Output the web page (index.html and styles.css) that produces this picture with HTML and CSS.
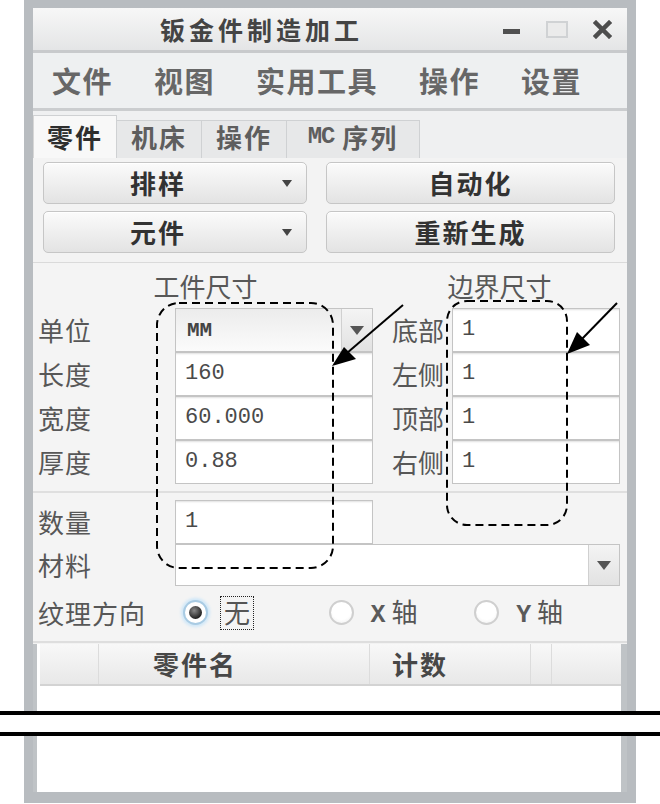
FILE: index.html
```html
<!DOCTYPE html>
<html lang="zh">
<head>
<meta charset="utf-8">
<title>钣金件制造加工</title>
<link rel="stylesheet" href="styles.css">
</head>
<body>
<div class="win">
  <div class="inner">
    <div class="titlebar">
      <span class="title">钣金件制造加工</span>
      <div class="ctrls">
        <span class="min"></span>
        <span class="max"></span>
        <svg class="close" width="19" height="19" viewBox="0 0 19 19"><path d="M3 3 L16 16 M16 3 L3 16" stroke="#4d4d4d" stroke-width="4.5" stroke-linecap="square"/></svg>
      </div>
    </div>
    <div class="menubar">
      <span>文件</span><span>视图</span><span>实用工具</span><span>操作</span><span>设置</span>
    </div>
    <div class="tabs">
      <div class="tab active t1">零件</div>
      <div class="tab t2">机床</div>
      <div class="tab t3">操作</div>
      <div class="tab t4"><span class="mono">MC</span>&nbsp;序列</div>
    </div>
    <div class="btns">
      <div class="btn drop"><span class="lbl">排样</span><span class="arr"><i class="tri small"></i></span></div>
      <div class="btn"><span class="lbl">自动化</span></div>
      <div class="btn drop"><span class="lbl">元件</span><span class="arr"><i class="tri small"></i></span></div>
      <div class="btn"><span class="lbl">重新生成</span></div>
    </div>
    <div class="form">
      <div class="head left">工件尺寸</div>
      <div class="head right">边界尺寸</div>

      <div class="lab">单位</div>
      <div class="combo"><span class="val">MM</span><span class="cbtn"><i class="tri"></i></span></div>
      <div class="lab r">底部</div>
      <div class="field">1</div>

      <div class="lab">长度</div>
      <div class="field">160</div>
      <div class="lab r">左侧</div>
      <div class="field">1</div>

      <div class="lab">宽度</div>
      <div class="field">60.000</div>
      <div class="lab r">顶部</div>
      <div class="field">1</div>

      <div class="lab">厚度</div>
      <div class="field">0.88</div>
      <div class="lab r">右侧</div>
      <div class="field">1</div>

      <div class="sep"></div>

      <div class="lab">数量</div>
      <div class="field">1</div>
      <div class="blank"></div>

      <div class="lab">材料</div>
      <div class="combo wide"><span class="val"></span><span class="cbtn"><i class="tri"></i></span></div>

      <div class="radios">
        <span class="rlab">纹理方向</span>
        <span class="ropt first"><span class="radio on"></span><span class="rtext focus">无</span></span>
        <span class="ropt"><span class="radio"></span><span class="rtext axis"><span class="mono">X</span> 轴</span></span>
        <span class="ropt"><span class="radio"></span><span class="rtext axis"><span class="mono">Y</span> 轴</span></span>
      </div>
    </div>
    <div class="table">
      <div class="thead">
        <div class="th c0"></div>
        <div class="th c1">零件名</div>
        <div class="th c2">计数</div>
        <div class="th c3"></div>
        <div class="th c4"></div>
      </div>
    </div>
  </div>
</div>

<div class="break"></div>

<svg class="annot" width="660" height="804" viewBox="0 0 660 804">
  <rect x="157" y="303" width="176" height="265" rx="22" fill="none" stroke="#000" stroke-width="2" stroke-dasharray="8 5"/>
  <rect x="447" y="301" width="120" height="224" rx="20" fill="none" stroke="#000" stroke-width="2" stroke-dasharray="8 5"/>
  <line x1="403" y1="305" x2="347" y2="353" stroke="#000" stroke-width="2"/>
  <polygon points="332,366 356,359 344,347" fill="#000"/>
  <line x1="617" y1="303" x2="580" y2="341" stroke="#000" stroke-width="2"/>
  <polygon points="567,354 590,345 577,332" fill="#000"/>
</svg>
</body>
</html>
```
FILE: styles.css
```css
* { box-sizing: border-box; }
html, body { margin: 0; padding: 0; }
body {
  width: 660px;
  height: 804px;
  position: relative;
  overflow: hidden;
  background: #fff;
  font-family: "Noto Sans CJK SC", "Noto Sans", sans-serif;
  line-height: 1;
}
.mono { font-family: "Liberation Mono", "DejaVu Sans Mono", monospace; }

.win {
  margin-left: 24px;
  width: 612px;
  height: 803px;
  background: #b8bcc0;
  padding: 8px 9px 11px 9px;
  display: flex;
  flex-direction: column;
}
.inner {
  flex: 1;
  display: flex;
  flex-direction: column;
  background: #f2f2f2;
}

/* title bar */
.titlebar {
  height: 45px;
  border-bottom: 3px solid #c8cacc;
  background: linear-gradient(#f7f7f7, #e4e5e6);
  display: flex;
  align-items: center;
  padding-left: 127px;
  padding-right: 15px;
}
.title {
  font-size: 25px;
  font-weight: 700;
  letter-spacing: 4px;
  color: #444;
}
.ctrls { margin-left: auto; display: flex; align-items: center; }
.min { width: 17px; height: 5px; background: #505050; margin-right: 26px; margin-top: 4px; }
.max { width: 22px; height: 17px; border: 2px solid #d0d2d4; background: #ebebeb; margin-right: 25px; }
.close { display: block; }

/* menu */
.menubar {
  height: 58px;
  border-bottom: 3px solid #cbcdcf;
  background: #eef0f1;
  display: flex;
  align-items: center;
  padding-left: 19px;
  gap: 41px;
  font-size: 29px;
  font-weight: 700;
  letter-spacing: 1.5px;
  color: #676767;
}

/* tabs */
.tabs {
  height: 47px;
  display: flex;
  align-items: flex-end;
  background: #eff0f1;
}
.tab {
  height: 38px;
  border: 1px solid #cfd1d3;
  border-bottom: none;
  border-left: none;
  background: #e7e8e9;
  display: flex;
  align-items: center;
  justify-content: center;
  font-size: 26px;
  font-weight: 700;
  letter-spacing: 2px;
  color: #5e5e5e;
  padding-bottom: 5px;
}
.tab.active {
  height: 43px;
  background: #f8f8f8;
  color: #2e2e2e;
  padding-bottom: 0;
  border-left: 1px solid #d6d6d6;
}
.t1 { width: 84px; }
.t2 { width: 85px; }
.t3 { width: 85px; }
.t4 { width: 133px; }
.t4 .mono { font-size: 24px; font-weight: 700; letter-spacing: -1px; }

/* buttons */
.btns {
  display: grid;
  grid-template-columns: 264px 289px;
  grid-auto-rows: 42px;
  column-gap: 19px;
  row-gap: 7px;
  padding: 4px 0 9px 10px;
  border-bottom: 1px solid #dadada;
  background: #f3f3f3;
}
.btn {
  border: 1px solid #c6c6c6;
  border-radius: 5px;
  background: linear-gradient(#fbfbfb, #e3e3e3);
  box-shadow: inset 0 1px 0 #fff;
  display: flex;
  align-items: center;
  justify-content: center;
  font-size: 26px;
  font-weight: 700;
  letter-spacing: 2px;
  color: #323232;
}
.btn.drop .lbl { flex: 1; text-align: center; padding-left: 4px; }
.btn .arr { width: 38px; display: flex; justify-content: center; }

.tri {
  display: block;
  width: 0;
  height: 0;
  border-left: 7px solid transparent;
  border-right: 7px solid transparent;
  border-top: 9px solid #555;
}
.tri.small {
  border-left-width: 5px;
  border-right-width: 5px;
  border-top-width: 7px;
  border-top-color: #444;
}

/* form */
.form {
  display: grid;
  grid-template-columns: 137px 198px 79px 168px;
  grid-template-rows: 45px repeat(4, 44px) 16px 44px 42px 55px;
  padding: 0 7px 0 5px;
  border-bottom: 2px solid #dedede;
  background: #f4f4f4;
}
.head {
  font-size: 26px;
  color: #585858;
  display: flex;
  align-items: center;
  justify-content: center;
  padding-top: 1px;
}
.head.left { grid-column: 1 / 3; }
.head.right { grid-column: 3 / 5; padding-left: 6px; }

.lab {
  font-size: 26px;
  letter-spacing: 1px;
  color: #575757;
  display: flex;
  align-items: center;
}
.lab.r { padding-left: 19px; letter-spacing: 0; }

.field {
  border: 1px solid #c4c4c4;
  background: #fff;
  box-shadow: inset 0 2px 2px -1px #e0e0e0;
  display: flex;
  align-items: center;
  padding-left: 9px;
  font-family: "Liberation Mono", "DejaVu Sans Mono", monospace;
  font-size: 22px;
  color: #4a4a4a;
}
.combo { display: flex; border: 1px solid #c4c4c4; }
.combo.wide { grid-column: 2 / 5; }
.combo .val {
  flex: 1;
  background: linear-gradient(#ececec, #fbfbfb);
  display: flex;
  align-items: center;
  padding-left: 11px;
  font-family: "Liberation Mono", "DejaVu Sans Mono", monospace;
  font-size: 21px;
  font-weight: 700;
  color: #444;
}
.combo.wide .val { background: #fff; }
.combo .cbtn {
  width: 31px;
  border-left: 1px solid #d0d0d0;
  background: linear-gradient(#f4f4f4, #e2e2e2);
  display: flex;
  align-items: center;
  justify-content: center;
}
.sep {
  grid-column: 1 / -1;
  align-self: center;
  height: 2px;
  background: #dfdfdf;
  margin: 0 -7px 0 -5px;
}
.blank { grid-column: 3 / 5; }

.radios {
  grid-column: 1 / -1;
  display: flex;
  align-items: center;
  padding-bottom: 2px;
}
.rlab {
  width: 137px;
  font-size: 26px;
  letter-spacing: 1px;
  color: #575757;
}
.ropt { display: flex; align-items: center; width: 148px; }
.ropt.first { width: 158px; padding-left: 10px; }
.radio {
  width: 25px;
  height: 25px;
  border-radius: 50%;
  border: 2px solid #cfcfcf;
  background: radial-gradient(circle at 50% 40%, #fff 55%, #ebebeb);
  flex: none;
}
.radio.on {
  border: 2px solid #a9cbe3;
  box-shadow: 0 0 3px 2px #cfe7f8;
  background: #fff;
  display: flex;
  align-items: center;
  justify-content: center;
}
.radio.on::after {
  content: "";
  width: 13px;
  height: 13px;
  border-radius: 50%;
  background: radial-gradient(circle at 40% 35%, #8a8a8a, #222 70%);
}
.rtext { margin-left: 12px; font-size: 26px; color: #555; }
.rtext.focus { border: 1px dotted #222; padding: 2px 3px 4px; }
.rtext.axis { margin-left: 17px; }
.rtext .mono { font-size: 25px; font-weight: 700; color: #5a5a5a; }

/* table */
.table {
  flex: 1;
  margin-top: 1px;
  background: #fff;
  border-left: 4px solid #bfc3c6;
  border-right: 6px solid #bfc3c6;
  padding-left: 3px;
}
.thead {
  display: flex;
  height: 42px;
  background: linear-gradient(#f8f8f8, #e8e8e8);
  border-bottom: 2px solid #d3d3d3;
}
.th {
  border-right: 1px solid #dcdcdc;
  display: flex;
  align-items: center;
  font-size: 26px;
  font-weight: 700;
  letter-spacing: 2px;
  color: #474747;
}
.c0 { width: 59px; }
.c1 { width: 271px; padding-left: 54px; }
.c2 { width: 161px; padding-left: 22px; }
.c3 { width: 21px; }
.c4 { width: 68px; border-right: none; }

/* break symbol and annotations over the screenshot */
.break {
  position: absolute;
  left: 0;
  top: 711px;
  width: 660px;
  height: 25px;
  border-top: 4px solid #000;
  border-bottom: 4px solid #000;
  background: #fff;
}
.annot { position: absolute; left: 0; top: 0; pointer-events: none; }
```
